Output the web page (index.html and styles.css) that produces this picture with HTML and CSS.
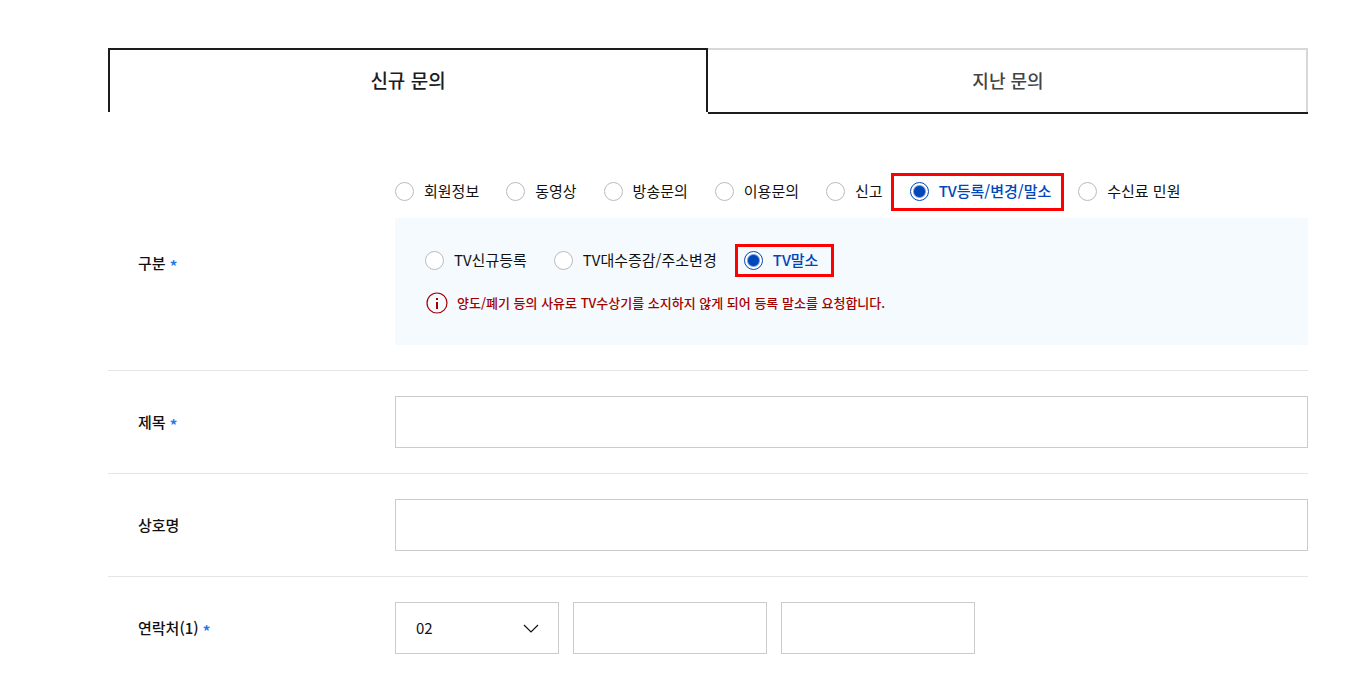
FILE: index.html
```html
<!DOCTYPE html>
<html lang="ko">

<head>
    <meta charset="UTF-8">
    <meta name="viewport" content="width=device-width, initial-scale=1.0">
    <title>신규 문의</title>
    <link rel="stylesheet" href="styles.css">
</head>

<body>
    <div id="wrap">
        <ul class="tab">
            <li class="on"><a href="#">신규 문의</a></li>
            <li><a href="#">지난 문의</a></li>
        </ul>

        <form action="#" class="form">
            <div class="row" role="radiogroup" aria-labelledby="type_title">
                <p class="title" id="type_title">구분 <em>*</em></p>
                <div class="cont">
                    <div class="radio_list">
                        <label><input type="radio" name="type"><span>회원정보</span></label>
                        <label><input type="radio" name="type"><span>동영상</span></label>
                        <label><input type="radio" name="type"><span>방송문의</span></label>
                        <label><input type="radio" name="type"><span>이용문의</span></label>
                        <label><input type="radio" name="type"><span>신고</span></label>
                        <label class="mark"><input type="radio" name="type" checked><span>TV등록/변경/말소</span></label>
                        <label><input type="radio" name="type"><span>수신료 민원</span></label>
                    </div>
                    <div class="sub_box">
                        <div class="radio_list" role="radiogroup" aria-label="TV등록/변경/말소">
                            <label><input type="radio" name="tv"><span>TV신규등록</span></label>
                            <label><input type="radio" name="tv"><span>TV대수증감/주소변경</span></label>
                            <label class="mark small"><input type="radio" name="tv" checked><span>TV말소</span></label>
                        </div>
                        <p class="notice">
                            <svg width="22" height="22" viewBox="0 0 22 22" aria-hidden="true">
                                <circle cx="11" cy="11" r="10" fill="none" stroke="#a50000" stroke-width="1.2"/>
                                <path d="M10 6h2v2h-2zM10 10h2v7h-2z" fill="#a50000"/>
                            </svg>
                            양도/폐기 등의 사유로 TV수상기를 소지하지 않게 되어 등록 말소를 요청합니다.
                        </p>
                    </div>
                </div>
            </div>

            <div class="row">
                <label class="title" for="subject">제목 <em>*</em></label>
                <div class="cont"><input type="text" id="subject" class="text"></div>
            </div>

            <div class="row">
                <label class="title" for="company">상호명</label>
                <div class="cont"><input type="text" id="company" class="text"></div>
            </div>

            <div class="row">
                <label class="title" for="tel1">연락처(1) <em>*</em></label>
                <div class="cont tel">
                    <div class="select">
                        <select id="tel1">
                            <option>02</option>
                            <option>031</option>
                            <option>010</option>
                        </select>
                        <svg width="16" height="9" viewBox="0 0 16 9" aria-hidden="true">
                            <path d="M1 1l7 7 7-7" fill="none" stroke="#111" stroke-width="1.2"/>
                        </svg>
                    </div>
                    <input type="text" class="text" aria-label="연락처 가운데 자리">
                    <input type="text" class="text" aria-label="연락처 끝자리">
                </div>
            </div>
        </form>
    </div>
</body>

</html>
```
FILE: styles.css
```css
* {
    margin: 0;
    padding: 0;
    box-sizing: border-box;
}

body {
    font-family: "Noto Sans CJK KR", sans-serif;
    font-size: 15px;
    line-height: 20px;
    color: #111;
    background: #fff;
}

li {
    list-style: none;
}

a {
    color: inherit;
    text-decoration: none;
}

input,
select {
    font: inherit;
    color: inherit;
}

#wrap {
    padding: 48px 38px 0 108px;
}

/* 탭 */
.tab {
    display: grid;
    grid-template-columns: 1fr 1fr;
    align-items: start;
}

.tab li {
    border-top: 2px solid #d8d8d8;
    border-right: 2px solid #d8d8d8;
    font-size: 18px;
    font-weight: 500;
    color: #444;
    text-align: center;
}

.tab a {
    display: block;
    padding-bottom: 2px;
    line-height: 60px;
    border-bottom: 2px solid #1c1c1f;
    margin-right: -2px;
}

.tab .on {
    border: 2px solid #1c1c1f;
    border-bottom: 0;
    font-size: 19px;
    color: #1c1c1f;
}

.tab .on a {
    margin-right: 0;
    border-bottom: 0;
}

/* 문의 폼 */
.form {
    padding-top: 42px;
}

.row {
    display: grid;
    grid-template-columns: 257px 1fr;
    align-items: center;
    padding: 25px 0 25px 30px;
    border-bottom: 1px solid #e5e5e5;
}

.row:last-child {
    border-bottom: 0;
}

.title {
    font-weight: 500;
}

.title em {
    font-style: normal;
    font-weight: 700;
    line-height: 1;
    vertical-align: -3px;
    color: #1f7af0;
}

.text,
.select select {
    width: 100%;
    height: 52px;
    padding: 0 20px;
    border: 1px solid #ccc;
    border-radius: 0;
    background: #fff;
    display: block;
}

/* 라디오 */
.radio_list {
    display: flex;
    flex-wrap: wrap;
    gap: 27px;
}

.radio_list label {
    position: relative;
    display: flex;
    align-items: center;
    gap: 10px;
}

.radio_list input {
    appearance: none;
    width: 19px;
    height: 19px;
    border: 1px solid #bbb;
    border-radius: 50%;
    background: #fff;
}

.radio_list input:checked {
    border-color: #0047ba;
    background: radial-gradient(circle, #0047ba 5px, #fff 7px);
}

.radio_list input:checked + span {
    font-weight: 500;
    color: #0047ba;
}

/* 강조 테두리 */
.mark::after {
    content: "";
    position: absolute;
    inset: -8px -13px -10px -19px;
    border: 3px solid #f00;
    pointer-events: none;
}

.small::after {
    inset: -6px -16px -7px -9px;
}

.sub_box {
    margin-top: 17px;
    padding: 32px 30px 31px;
    background: #f4fafd;
}

.notice {
    display: flex;
    align-items: center;
    gap: 9px;
    margin-top: 22px;
    padding-left: 1px;
    font-size: 13px;
    font-weight: 500;
    color: #a50000;
}

/* 연락처 */
.tel {
    display: flex;
    gap: 14px;
}

.tel .text {
    width: 194px;
}

.select {
    position: relative;
    width: 164px;
}

.select select {
    appearance: none;
}

.select svg {
    position: absolute;
    top: 22px;
    right: 20px;
    pointer-events: none;
}
```
